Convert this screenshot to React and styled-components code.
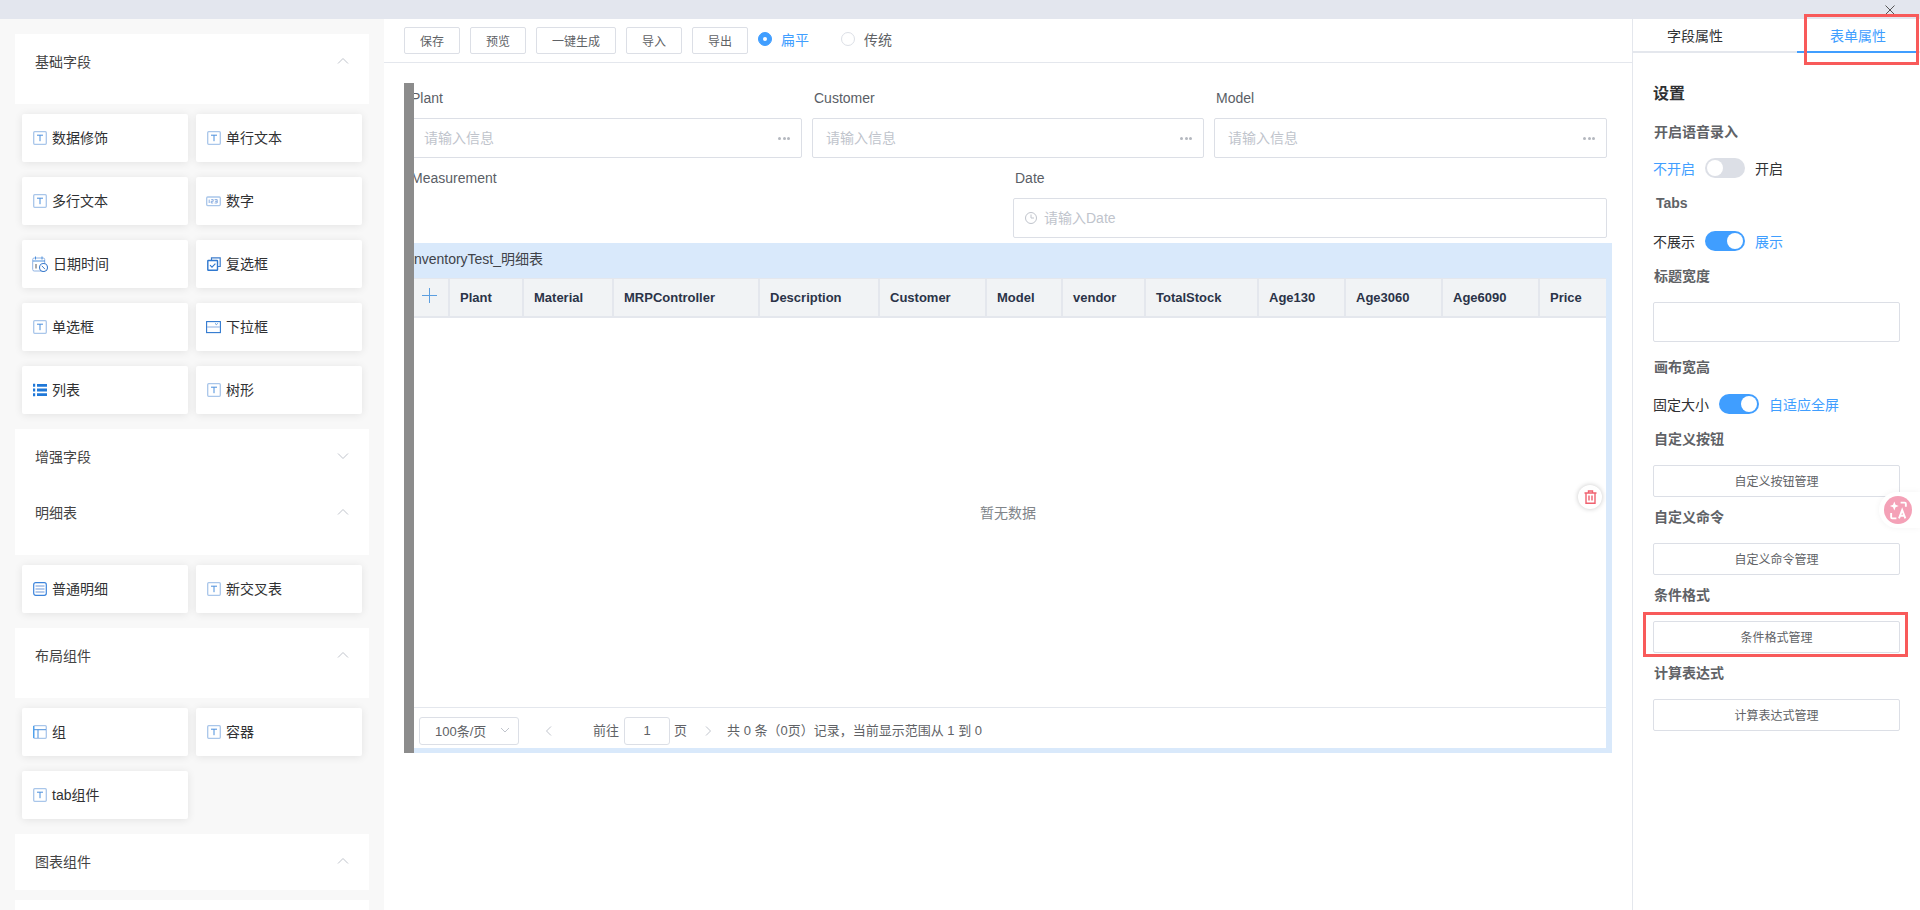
import React from "react";
import styled, { createGlobalStyle } from "styled-components";

const Global = createGlobalStyle`
  html, body { margin: 0; padding: 0; height: 910px; overflow: hidden; background: #fff; }
  * { box-sizing: border-box; }
  body { font-family: "Liberation Sans", "Noto Sans CJK SC", sans-serif; font-size: 14px; color: #303133; }
`;

const Page = styled.div`
  width: 1920px;
  height: 910px;
  display: flex;
  flex-direction: column;
  position: relative;
  overflow: hidden;
`;
const TopStrip = styled.div`
  height: 19px;
  flex: none;
  background: #e3e6ee;
`;
const Body = styled.div`
  flex: 1;
  display: flex;
  min-height: 0;
`;

/* left */
const Sidebar = styled.aside`
  width: 384px;
  flex: none;
  background: #f8f8f8;
  padding: 15px 15px 0;
  overflow: hidden;
`;
const SectionHeader = styled.div`
  height: ${(p) => (p.$tall ? 70 : 56)}px;
  margin-top: ${(p) => p.$gap || 0}px;
  background: #fff;
  padding: 18px 20px 0;
  display: flex;
  justify-content: space-between;
  color: #444;
  font-size: 14px;
  line-height: 20px;
`;
const Chevron = styled.svg`
  width: 12px;
  height: 8px;
  margin: 5px 0 0;
  fill: none;
  stroke: #c0c4cc;
  stroke-width: 1;
`;
const CardGrid = styled.div`
  display: grid;
  grid-template-columns: 166px 166px;
  gap: 15px 8px;
  padding: 10px 7px 15px;
`;
const Card = styled.div`
  height: 48px;
  background: #fff;
  border-radius: 2px;
  box-shadow: 0 1px 8px rgba(0, 0, 0, 0.09);
  padding-left: 11px;
  display: flex;
  align-items: center;
  gap: 5px;
  color: #303133;
  font-size: 14px;
`;
const CardLabel = styled.span`
  margin-bottom: 2px;
`;
const IconBox = styled.svg`
  width: ${(p) => p.$w || 14}px;
  height: ${(p) => p.$w || 14}px;
  margin-left: ${(p) => p.$ml || 0}px;
  flex: none;
`;

const T = () => (
  <IconBox viewBox="0 0 14 14">
    <rect x="0.7" y="0.7" width="12.6" height="12.6" rx="1" fill="#fff" stroke="#a9c6ea" strokeWidth="1.3" />
    <path d="M4 4.2h6M7 4.2v6" fill="none" stroke="#4a8fdc" strokeWidth="1" />
  </IconBox>
);
const Num = () => (
  <IconBox viewBox="0 0 15 15" $w={15} $ml={-1}>
    <rect x="0.7" y="3" width="13.6" height="8.6" rx="1" fill="#fff" stroke="#a9c6ea" strokeWidth="1.3" />
    <path d="M3.2 5.6v3.4M5.2 5.6h2v1.7h-2V9h2M8.6 5.6h2.6v3.4H8.6M9 7.3h2.2" fill="none" stroke="#5f8fd6" strokeWidth=".7" />
  </IconBox>
);
const DateIcon = () => (
  <IconBox viewBox="0 0 16 16" $w={16} $ml={-1}>
    <rect x="0.7" y="2" width="12" height="13" rx="1.5" fill="#fff" stroke="#8fb3e3" strokeWidth="1" />
    <path d="M3.5 0.5v3M10 0.5v3M1 5h12" stroke="#4a8fdc" strokeWidth="1" fill="none" />
    <path d="M4 8v4.5" stroke="#555" strokeWidth="1" />
    <circle cx="11.5" cy="11.5" r="4" fill="#fff" stroke="#3c7ccc" strokeWidth="1.1" />
    <path d="M9.8 9.8l3.2 3.4" stroke="#3c7ccc" strokeWidth="1" />
  </IconBox>
);
const CheckIcon = () => (
  <IconBox viewBox="0 0 14 14">
    <path d="M4.5 3V.8h8.7v8.7H11" fill="none" stroke="#3c7ccc" strokeWidth="1.2" />
    <rect x="0.8" y="3.5" width="9.7" height="9.7" rx="0.5" fill="#fff" stroke="#2f78cf" strokeWidth="1.4" />
    <path d="M3 8.2l2 2 3.4-3.6" fill="none" stroke="#2f78cf" strokeWidth="1.1" />
  </IconBox>
);
const SelectIcon = () => (
  <IconBox viewBox="0 0 15 15" $w={15} $ml={-1}>
    <rect x="0.6" y="1.6" width="13.8" height="11" fill="#fff" stroke="#2f78cf" strokeWidth="1.1" />
    <path d="M1 7h13" fill="none" stroke="#9dbbe6" strokeWidth="1.2" />
    <path d="M9 3.4l1.4 1.2 1.4-1.2" fill="none" stroke="#4a8fdc" strokeWidth="0.9" />
  </IconBox>
);
const ListIcon = () => (
  <IconBox viewBox="0 0 14 14">
    <path d="M0 .8h2.2v3H0zM0 5.5h2.2v3H0zM0 10.2h2.2v3H0zM4 1h10v2.8H4zM4 5.6h10v2.8H4zM4 10.3h10v2.8H4z" fill="#1f78d8" />
  </IconBox>
);
const DetailIcon = () => (
  <IconBox viewBox="0 0 14 14">
    <rect x="0.7" y="0.7" width="12.6" height="12.6" rx="2" fill="#fff" stroke="#3c84dc" strokeWidth="1.2" />
    <path d="M2.5 4h9M2.5 7h9M2.5 10h9" stroke="#9dbbe6" strokeWidth="1.4" />
  </IconBox>
);
const GroupIcon = () => (
  <IconBox viewBox="0 0 14 14">
    <rect x="0.7" y="0.7" width="12.6" height="12.6" rx="1" fill="#fff" stroke="#a9c6ea" strokeWidth="1.3" />
    <path d="M1 4.7h12M5 4.7V13" stroke="#4a8fdc" strokeWidth="1" fill="none" />
    <path d="M.7 1v12" stroke="#4a9fee" strokeWidth="1.3" />
  </IconBox>
);

const fields = [
  [<T />, "数据修饰"], [<T />, "单行文本"], [<T />, "多行文本"], [<Num />, "数字"], [<DateIcon />, "日期时间"],
  [<CheckIcon />, "复选框"], [<T />, "单选框"], [<SelectIcon />, "下拉框"], [<ListIcon />, "列表"], [<T />, "树形"],
];
const details = [[<DetailIcon />, "普通明细"], [<T />, "新交叉表"]];
const layouts = [[<GroupIcon />, "组"], [<T />, "容器"], [<T />, "tab组件"]];

const Section = ({ title, open, tall, items, gap }) => (
  <>
    <SectionHeader $tall={tall} $gap={gap}>
      {title}
      <Chevron viewBox="0 0 12 8">
        <path d={open ? "M1 6.5L6 1.5l5 5" : "M1 1.5l5 5 5-5"} />
      </Chevron>
    </SectionHeader>
    {items && (
      <CardGrid>
        {items.map(([icon, label]) => (
          <Card key={label}>
            {icon}
            <CardLabel>{label}</CardLabel>
          </Card>
        ))}
      </CardGrid>
    )}
  </>
);

/* center */
const Center = styled.main`
  flex: 1;
  min-width: 0;
  display: flex;
  flex-direction: column;
`;
const Toolbar = styled.div`
  height: 44px;
  flex: none;
  border-bottom: 1px solid #e4e7ed;
  padding: 8px 20px 0;
  display: flex;
  align-items: flex-start;
  gap: 10px;
`;
const ToolButton = styled.button`
  height: 27px;
  width: ${(p) => p.$w || 56}px;
  padding: 0;
  background: #fff;
  border: 1px solid #dcdfe6;
  border-radius: 2px;
  color: #606266;
  font: 12px "Liberation Sans", "Noto Sans CJK SC", sans-serif;
`;
const Radio = styled.label`
  display: flex;
  align-items: center;
  gap: 9px;
  height: 24px;
  width: ${(p) => p.$w}px;
  font-size: 14px;
  color: ${(p) => (p.$on ? "#409eff" : "#606266")};
`;
const RadioDot = styled.span`
  width: 14px;
  height: 14px;
  flex: none;
  border-radius: 50%;
  background: ${(p) => (p.$on ? "#409eff" : "#fff")};
  border: 1px solid ${(p) => (p.$on ? "#409eff" : "#dcdfe6")};
  display: flex;
  align-items: center;
  justify-content: center;
  &::after {
    content: "";
    width: 4px;
    height: 4px;
    border-radius: 50%;
    background: #fff;
  }
`;
const CanvasWrap = styled.div`
  padding: 20px 20px 0;
`;
const Canvas = styled.div`
  position: relative;
  height: 670px;
  padding-left: 6px;
  &::before {
    content: "";
    position: absolute;
    left: 0;
    top: 0;
    bottom: 0;
    width: 10px;
    background: #8c8c8c;
    z-index: 2;
  }
`;
const FormRow = styled.div`
  display: grid;
  width: 1197px;
  grid-template-columns: ${(p) => p.$cols};
  column-gap: 10px;
  height: 75px;
  margin-bottom: 5px;
`;
const Field = styled.div`
  display: flex;
  flex-direction: column;
`;
const FieldLabel = styled.div`
  height: 35px;
  padding: 5px 0 0 ${(p) => (p.$first ? 1 : 2)}px;
  line-height: 20px;
  font-size: 14px;
  color: #5a5e66;
`;
const InputBox = styled.div`
  height: 40px;
  border: 1px solid #dcdfe6;
  border-radius: 2px;
  padding: 0 ${(p) => (p.$date ? 0 : 11)}px 0 ${(p) => (p.$date ? 10 : 13)}px;
  display: flex;
  align-items: center;
  gap: 6px;
  justify-content: ${(p) => (p.$date ? "flex-start" : "space-between")};
  background: #fff;
  color: #c0c4cc;
  font-size: 14px;
`;
const Placeholder = styled.span`
  margin-bottom: 2px;
`;
const Dots = styled.span`
  display: flex;
  gap: 1.5px;
  & > i {
    width: 3px;
    height: 3px;
    border-radius: 50%;
    background: #b4b8bf;
  }
`;
const Band = styled.div`
  width: 1202px;
  height: 35px;
  background: #d9e9fb;
  line-height: 33px;
  font-size: 14px;
  color: #404349;
`;
const TableBox = styled.div`
  width: 1202px;
  height: 475px;
  border-right: 6px solid #d9e9fb;
  border-bottom: 5px solid #d9e9fb;
  display: flex;
  flex-direction: column;
  background: #fff;
  position: relative;
`;
const HeadRow = styled.div`
  display: grid;
  grid-template-columns: 40px 74px 90px 146px 120px 107px 76px 83px 113px 87px 97px 97px 66px;
  height: 40px;
  flex: none;
  background: #f1f3f5;
  border-top: 1px solid #e4e7ed;
  border-bottom: 2px solid #e4e7ed;
`;
const HeadCell = styled.div`
  border-right: ${(p) => (p.$last ? 0 : 2)}px solid #e4e7ed;
  padding-left: 10px;
  font-size: 13px;
  font-weight: bold;
  line-height: 38px;
  color: #2b3348;
`;
const PlusCell = styled.div`
  border-right: 2px solid #e4e7ed;
  display: flex;
  justify-content: center;
  padding: 9px 0 0 0;
`;
const Empty = styled.div`
  flex: 1;
  display: flex;
  align-items: center;
  justify-content: center;
  padding-bottom: 2px;
  font-size: 14px;
  color: #808489;
`;
const Pager = styled.div`
  height: 41px;
  flex: none;
  border-top: 1px solid #e4e7ed;
  padding: 9px 0 0 9px;
  display: flex;
  align-items: flex-start;
  color: #606266;
  font-size: 13px;
`;
const PageSelect = styled.div`
  width: 100px;
  height: 28px;
  border: 1px solid #dcdfe6;
  border-radius: 3px;
  padding: 0 8px 2px 15px;
  display: flex;
  align-items: center;
  justify-content: space-between;
  color: #606266;
`;
const PagerChevron = styled.svg`
  width: 10px;
  height: 12px;
  margin: 8px ${(p) => p.$mr}px 0 ${(p) => p.$ml}px;
  fill: none;
  stroke: #c0c4cc;
  stroke-width: 1;
`;
const PagerText = styled.span`
  line-height: 27px;
`;
const PageInput = styled.div`
  width: 46px;
  height: 28px;
  border: 1px solid #dcdfe6;
  border-radius: 3px;
  margin: 0 4px 0 5px;
  text-align: center;
  line-height: 26px;
  color: #606266;
`;
const TrashButton = styled.div`
  position: absolute;
  right: 4px;
  top: 207px;
  width: 24px;
  height: 24px;
  border-radius: 50%;
  background: #fff;
  box-shadow: 0 0 5px rgba(0, 0, 0, 0.22);
  display: flex;
  align-items: center;
  justify-content: center;
`;

/* right */
const RightPanel = styled.aside`
  width: 288px;
  flex: none;
  border-left: 1px solid #e4e7ed;
  display: flex;
  flex-direction: column;
  position: relative;
`;
const Tabs = styled.div`
  height: 34px;
  flex: none;
  display: grid;
  grid-template-columns: 164px 121px 2px;
  border-bottom: 2px solid #e4e7ed;
`;
const Tab = styled.div`
  height: 34px;
  line-height: 35px;
  font-size: 14px;
  padding-left: ${(p) => (p.$active ? 33 : 34)}px;
  color: ${(p) => (p.$active ? "#409eff" : "#303133")};
  border-bottom: ${(p) => (p.$active ? "2px solid #409eff" : "none")};
`;
const Settings = styled.div`
  padding: 0 20px;
`;
const SettingsTitle = styled.div`
  font-size: 16px;
  font-weight: bold;
  color: #303133;
  margin-top: 30px;
  line-height: 22px;
  height: 39px;
`;
const SetLabel = styled.div`
  font-size: 14px;
  font-weight: bold;
  color: #606266;
  line-height: 20px;
  height: ${(p) => p.$h || 36}px;
  padding-top: ${(p) => p.$pt || 0}px;
  padding-left: ${(p) => p.$pl ?? 1}px;
`;
const ToggleRow = styled.div`
  display: flex;
  align-items: center;
  gap: 10px;
  height: 20px;
  margin-bottom: 15px;
  font-size: 14px;
`;
const ToggleText = styled.span`
  margin-bottom: 1px;
  color: ${(p) => (p.$on ? "#409eff" : "#303133")};
`;
const Toggle = styled.span`
  width: 40px;
  height: 20px;
  border-radius: 10px;
  background: ${(p) => (p.$on ? "#409eff" : "#dcdfe6")};
  position: relative;
  &::after {
    content: "";
    position: absolute;
    top: 2px;
    left: ${(p) => (p.$on ? 22 : 2)}px;
    width: 16px;
    height: 16px;
    border-radius: 50%;
    background: #fff;
  }
`;
const WidthInput = styled.div`
  width: 247px;
  height: 40px;
  border: 1px solid #dcdfe6;
  border-radius: 2px;
`;
const ManageButton = styled.button`
  display: block;
  width: 247px;
  height: 32px;
  padding: 0 0 2px;
  background: #fff;
  border: 1px solid #dcdfe6;
  border-radius: 2px;
  color: #606266;
  font: 12px "Liberation Sans", "Noto Sans CJK SC", sans-serif;
  margin-bottom: 10px;
`;
const Highlight = styled.div`
  position: absolute;
  left: ${(p) => p.$l}px;
  top: ${(p) => p.$t}px;
  width: ${(p) => p.$w}px;
  height: ${(p) => p.$h}px;
  border: 3px solid #f85a5a;
  pointer-events: none;
  z-index: 5;
`;
const CloseIcon = styled.svg`
  position: absolute;
  left: 1885px;
  top: 5px;
  width: 10px;
  height: 10px;
  stroke: #555;
  stroke-width: 1;
  fill: none;
  z-index: 3;
`;
const TranslatePill = styled.div`
  position: absolute;
  right: 0;
  top: 492px;
  width: 41px;
  height: 36px;
  background: #fff;
  border-radius: 18px 0 0 18px;
  box-shadow: 0 0 6px rgba(0, 0, 0, 0.05);
  padding: 4px 0 0 5px;
  z-index: 6;
`;
const TranslateDisc = styled.div`
  width: 28px;
  height: 28px;
  border-radius: 50%;
  background: #f4a1b7;
  display: flex;
  align-items: center;
  justify-content: center;
`;

const heads = ["Plant", "Material", "MRPController", "Description", "Customer", "Model", "vendor", "TotalStock", "Age130", "Age3060", "Age6090", "Price"];

export default function App() {
  return (
    <Page>
      <Global />
      <TopStrip />
      <CloseIcon viewBox="0 0 10 10">
        <path d="M0.5 0.5l9 9M9.5 0.5l-9 9" />
      </CloseIcon>
      <Body>
        <Sidebar>
          <Section title="基础字段" open tall items={fields} />
          <Section title="增强字段" />
          <Section title="明细表" open tall items={details} />
          <Section title="布局组件" open tall items={layouts} />
          <Section title="图表组件" open />
          <SectionHeader $tall $gap={10} />
        </Sidebar>
        <Center>
          <Toolbar>
            <ToolButton>保存</ToolButton>
            <ToolButton>预览</ToolButton>
            <ToolButton $w={80}>一键生成</ToolButton>
            <ToolButton>导入</ToolButton>
            <ToolButton>导出</ToolButton>
            <Radio $on $w={73}>
              <RadioDot $on />
              扁平
            </Radio>
            <Radio $w={60}>
              <RadioDot />
              传统
            </Radio>
          </Toolbar>
          <CanvasWrap>
            <Canvas>
              <FormRow $cols="392px 392px 393px">
                {["Plant", "Customer", "Model"].map((l, i) => (
                  <Field key={l}>
                    <FieldLabel $first={i === 0}>{l}</FieldLabel>
                    <InputBox>
                      <Placeholder>请输入信息</Placeholder>
                      <Dots>
                        <i />
                        <i />
                        <i />
                      </Dots>
                    </InputBox>
                  </Field>
                ))}
              </FormRow>
              <FormRow $cols="593px 594px">
                <Field>
                  <FieldLabel $first>Measurement</FieldLabel>
                </Field>
                <Field>
                  <FieldLabel>Date</FieldLabel>
                  <InputBox $date>
                    <svg width="14" height="14" viewBox="0 0 14 14" fill="none" stroke="#c0c4cc" strokeWidth="1">
                      <circle cx="7" cy="7" r="5.5" />
                      <path d="M7 3.5V7h3" />
                    </svg>
                    <Placeholder>请输入Date</Placeholder>
                  </InputBox>
                </Field>
              </FormRow>
              <Band>InventoryTest_明细表</Band>
              <TableBox>
                <HeadRow>
                  <PlusCell>
                    <svg width="15" height="15" viewBox="0 0 15 15" stroke="#5b9ee0" strokeWidth="1">
                      <path d="M7.5 0v15M0 7.5h15" />
                    </svg>
                  </PlusCell>
                  {heads.map((h, i) => (
                    <HeadCell key={h} $last={i === heads.length - 1}>
                      {h}
                    </HeadCell>
                  ))}
                </HeadRow>
                <Empty>暂无数据</Empty>
                <Pager>
                  <PageSelect>
                    100条/页
                    <svg width="10" height="6" viewBox="0 0 10 6" fill="none" stroke="#c0c4cc">
                      <path d="M1 1l4 4 4-4" />
                    </svg>
                  </PageSelect>
                  <PagerChevron viewBox="0 0 10 12" $ml={25} $mr={39}>
                    <path d="M7 1.5L2.5 6 7 10.5" />
                  </PagerChevron>
                  <PagerText>前往</PagerText>
                  <PageInput>1</PageInput>
                  <PagerText>页</PagerText>
                  <PagerChevron viewBox="0 0 10 12" $ml={16} $mr={14}>
                    <path d="M3 1.5L7.5 6 3 10.5" />
                  </PagerChevron>
                  <PagerText>共 0 条（0页）记录，当前显示范围从 1 到 0</PagerText>
                </Pager>
                <TrashButton>
                  <svg width="13" height="14" viewBox="0 0 13 14" fill="none" stroke="#f0616f" strokeWidth="1.4">
                    <path d="M0.5 3h12M4.5 3V1h4v2M2 3v10.2h9V3M5 5.500v5M8 5.500v5" />
                  </svg>
                </TrashButton>
              </TableBox>
            </Canvas>
          </CanvasWrap>
        </Center>
        <RightPanel>
          <Tabs>
            <Tab>字段属性</Tab>
            <Tab $active>表单属性</Tab>
          </Tabs>
          <Settings>
            <SettingsTitle>设置</SettingsTitle>
            <SetLabel>开启语音录入</SetLabel>
            <ToggleRow>
              <ToggleText $on>不开启</ToggleText>
              <Toggle />
              <ToggleText>开启</ToggleText>
            </ToggleRow>
            <SetLabel $pl={3} $h={38}>Tabs</SetLabel>
            <ToggleRow>
              <ToggleText>不展示</ToggleText>
              <Toggle $on />
              <ToggleText $on>展示</ToggleText>
            </ToggleRow>
            <SetLabel>标题宽度</SetLabel>
            <WidthInput />
            <SetLabel $h={52} $pt={15}>画布宽高</SetLabel>
            <ToggleRow>
              <ToggleText>固定大小</ToggleText>
              <Toggle $on />
              <ToggleText $on>自适应全屏</ToggleText>
            </ToggleRow>
            <SetLabel>自定义按钮</SetLabel>
            <ManageButton>自定义按钮管理</ManageButton>
            <SetLabel>自定义命令</SetLabel>
            <ManageButton>自定义命令管理</ManageButton>
            <SetLabel>条件格式</SetLabel>
            <ManageButton>条件格式管理</ManageButton>
            <SetLabel>计算表达式</SetLabel>
            <ManageButton>计算表达式管理</ManageButton>
          </Settings>
          <Highlight $l={171} $t={-5} $w={115} $h={51} />
          <Highlight $l={10} $t={593} $w={265} $h={45} />
        </RightPanel>
      </Body>
      <TranslatePill>
        <TranslateDisc>
          <svg width="21" height="21" viewBox="0 0 20 20" fill="none" stroke="#fff" strokeWidth="1.8">
            <path d="M12 2.500h4a1 1 0 0 1 1 1v3M8 17.500H4a1 1 0 0 1-1-1v-4" />
            <path d="M6 1.500l1.200 3 3 1.200-3 1.200L6 10 4.800 6.900l-3-1.200 3-1.200z" fill="#fff" stroke="none" />
            <path d="M10.500 17.500l3-8 3 8M11.600 15h3.800" />
          </svg>
        </TranslateDisc>
      </TranslatePill>
    </Page>
  );
}
